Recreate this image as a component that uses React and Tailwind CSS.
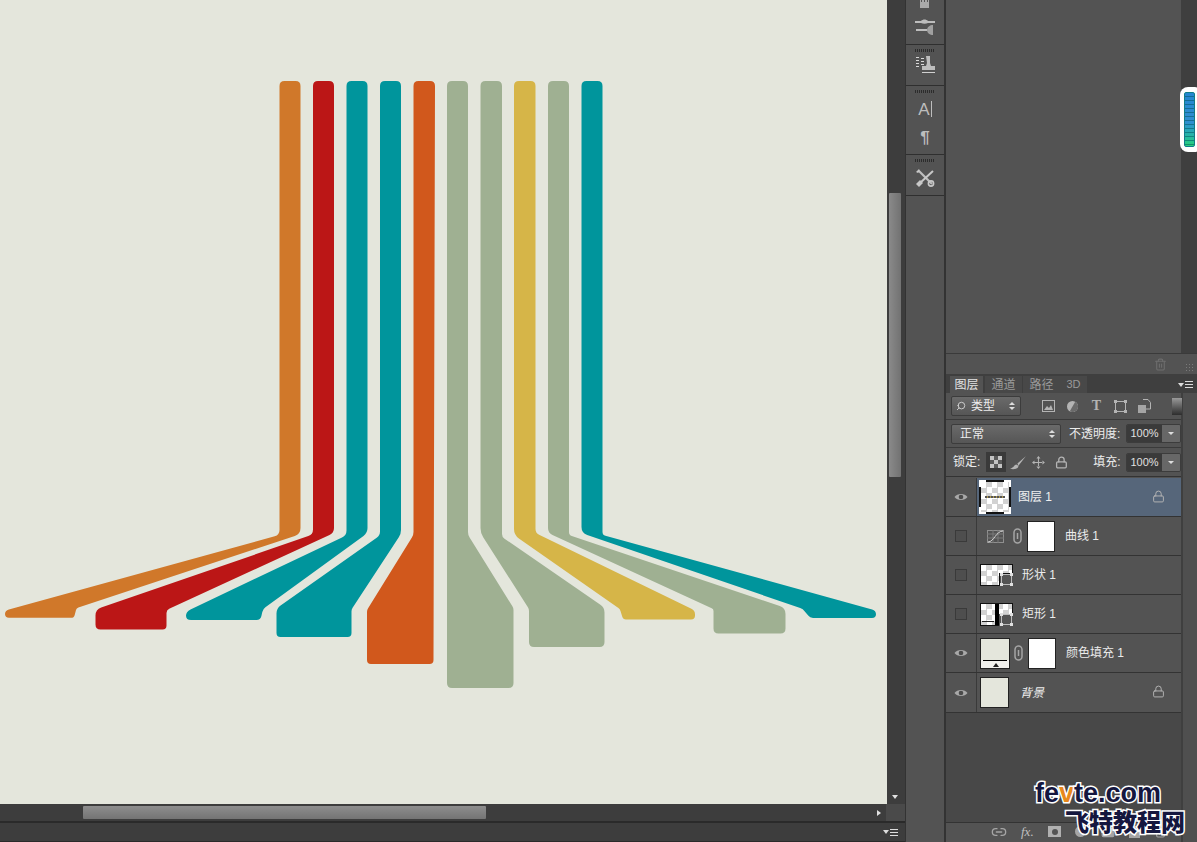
import React from "react";
import { Lock, Trash2, Link2, Folder, Search } from "lucide-react";

const FONT = "font-['Liberation_Sans','Noto_Sans_CJK_SC',sans-serif]";

function roundedPath(pts) {
  const n = pts.length;
  let d = "";
  pts.forEach((p, i) => {
    const [x, y, r = 0] = p;
    const a = pts[(i - 1 + n) % n];
    const b = pts[(i + 1) % n];
    const la = Math.hypot(a[0] - x, a[1] - y);
    const lb = Math.hypot(b[0] - x, b[1] - y);
    const ra = Math.min(r, la / 2);
    const rb = Math.min(r, lb / 2);
    const sx = x + ((a[0] - x) / la) * ra;
    const sy = y + ((a[1] - y) / la) * ra;
    const ex = x + ((b[0] - x) / lb) * rb;
    const ey = y + ((b[1] - y) / lb) * rb;
    d += `${i === 0 ? "M" : "L"}${sx.toFixed(1)} ${sy.toFixed(1)} Q${x} ${y} ${ex.toFixed(1)} ${ey.toFixed(1)} `;
  });
  return d + "Z";
}

const T = 81;
const shapes = [
  ["#d0782a", [[279.5,T,5],[300.5,T,5],[300.5,534,6],[76.5,608,2],[74,617.8,3],[5,617.8,4],[5,610.5,4],[279.5,535,5]]],
  ["#bb1616", [[313,T,5],[334,T,5],[334,533,5],[166.5,610,3],[166.5,629.5,4],[95.5,629.5,5],[95.5,609.5,6],[313,534.5,5]]],
  ["#00959c", [[346.5,T,5],[367.5,T,5],[367.5,533,5],[263,609,3],[260.5,620,4],[186,620,5],[186,611.5,5],[346.5,535.5,5]]],
  ["#00959c", [[380,T,5],[401,T,5],[401,534,4],[351.5,609.5,2],[351.5,637,4],[276.5,637,4],[276.5,608.5,5],[380,535.5,4]]],
  ["#d1581c", [[413.5,T,5],[435,T,5],[433.5,664,4],[367,664,4],[367,610,2],[413.5,535,3]]],
  ["#9fb092", [[447,T,5],[468,T,5],[468,535,3],[513.5,608,2],[513.5,688,5],[447,688,5]]],
  ["#9fb092", [[480.5,T,5],[502,T,5],[502,537,3],[604.5,607.5,5],[604.5,647,5],[529,647,5],[529,609,2],[480.5,533,5]]],
  ["#d6b548", [[514,T,5],[535.5,T,5],[535.5,533,4],[695,610.5,4],[695,619.5,4],[623,619.5,3],[620,609,2],[514,535,6]]],
  ["#9fb092", [[548,T,5],[569,T,5],[569,535,3],[785.5,608,6],[785.5,633.5,5],[713.5,633.5,5],[713.5,609,2],[548,533,5]]],
  ["#00959c", [[581.5,T,5],[602.5,T,5],[602.5,535,3],[876,610.5,4],[876,618,4],[810,618,3],[803,609,3],[581.5,533,6]]],
];

function Canvas() {
  return (
    <div className="w-[887px] h-full bg-[#e4e6dc] shrink-0">
      <svg width="887" height="804" viewBox="0 0 887 804" className="block">
        {shapes.map(([c, p], i) => (
          <path key={i} d={roundedPath(p)} fill={c} />
        ))}
      </svg>
    </div>
  );
}

function Grip() {
  return <div className="mx-auto w-[20px] h-[3px] bg-[repeating-linear-gradient(90deg,#2c2c2c_0_1px,transparent_1px_2px)]" />;
}

function Dock() {
  return (
    <div className={`w-[41px] shrink-0 h-full bg-[#535353] border-r-2 border-l border-[#333333] flex flex-col ${FONT}`}>
      <div className="h-[45px] border-b border-[#2f2f2f] flex flex-col items-center">
        <svg width="24" height="42" viewBox="0 0 24 42" className="block">
          <path d="M7 0h1v2h1V0h2v2h1V0h2v2h1V0h1v8H7z" fill="#a9a9a9" />
          <path d="M2 21h6c2-2 5-2 7 0h7v2h-7c-2 1-5 1-7 0H2z" fill="#bdbdbd" />
          <path d="M3 29h11v2H3z" fill="#bdbdbd" />
          <path d="M14 30c0-3 3-5 6-5v10c-3 0-6-2-6-5z" fill="#a0a0a0" />
        </svg>
      </div>
      <div className="h-[41px] pt-[4px] border-b border-[#2f2f2f] flex flex-col items-center">
        <Grip />
        <svg width="22" height="24" viewBox="0 0 22 24" className="block mt-[1px]">
          <path d="M2 4h3v1H2zM2 7h3v1H2zM2 10h3v1H2zM2 13h3v1H2zM7 5h3v1H7zM7 8h3v1H7zM7 11h3v1H7z" fill="#d8d8d8" />
          <path d="M12 3h4v7l1 3h4v4H8v-4h4l1-3z" fill="#bdbdbd" />
          <path d="M8 19h13v1H8z" fill="#d0d0d0" />
        </svg>
      </div>
      <div className="h-[69px] pt-[4px] border-b border-[#2f2f2f] flex flex-col items-center">
        <Grip />
        <div className="h-[30px] mt-[1px] flex items-center text-[#bdbdbd] text-[17px] leading-none">
          A<span className="w-px h-[16px] bg-[#bdbdbd] ml-[1px]" />
        </div>
        <div className="h-[26px] flex items-center text-[#bdbdbd] text-[17px] font-bold leading-none">¶</div>
      </div>
      <div className="h-[41px] pt-[4px] border-b border-[#2f2f2f] flex flex-col items-center">
        <Grip />
        <svg width="20" height="20" viewBox="0 0 20 20" className="block mt-[6px]">
          <path d="M4 3l13 13" stroke="#bdbdbd" strokeWidth="2.2" />
          <path d="M18 3L5 15" stroke="#c8c8c8" strokeWidth="2" />
          <path d="M1 4l3-3 1 2-2 2z" fill="#c8c8c8" />
          <circle cx="16" cy="15.5" r="2.6" fill="none" stroke="#c8c8c8" strokeWidth="1.6" />
          <path d="M1 16l4-4 3 3-4 4z" fill="#c8c8c8" />
        </svg>
      </div>
    </div>
  );
}

function Eye() {
  return (
    <svg width="14" height="10" viewBox="0 0 14 10" className="block">
      <path d="M0.5 5C3 1 11 1 13.5 5 11 9 3 9 0.5 5z" fill="#a9a9a9" />
      <circle cx="7" cy="5" r="2.3" fill="#4a4a4a" />
    </svg>
  );
}

function Check() {
  return <div className="w-[12px] h-[12px] border border-[#3a3a3a] bg-[#4e4e4e]" />;
}

const CHECKER = "bg-[repeating-conic-gradient(#d2d2d2_0_25%,#ffffff_0_50%)] bg-[length:11px_11px]";

function LinkIcon() {
  return (
    <svg width="9" height="16" viewBox="0 0 9 16" className="block">
      <rect x="1" y="1" width="7" height="14" rx="3.5" fill="none" stroke="#a5a5a5" strokeWidth="1.5" />
      <path d="M4.5 5v6" stroke="#a5a5a5" strokeWidth="1.5" />
    </svg>
  );
}

function Mask() {
  return <div className="w-[28px] h-[31px] bg-white border border-[#222222] shrink-0" />;
}

function VectorBadge() {
  return (
    <svg width="13" height="13" viewBox="0 0 13 13" className="absolute right-[-1px] bottom-[-1px]">
      <rect x="1.5" y="1.5" width="10" height="10" fill="none" stroke="#bdbdbd" />
      <path d="M0 0h3v3H0zM10 0h3v3h-3zM0 10h3v3H0zM10 10h3v3h-3z" fill="#e0e0e0" />
    </svg>
  );
}

function Label({ children, className = "" }) {
  return <span className={`text-[12px] text-[#ececec] leading-none whitespace-nowrap ${className}`}>{children}</span>;
}

function Row({ eye, selected, children, right, h = "h-[39px]" }) {
  return (
    <div className={`${h} flex border-b border-[#333333] shrink-0`}>
      <div className="w-[31px] shrink-0 border-r border-[#3a3a3a] flex items-center justify-center">
        {eye ? <Eye /> : <Check />}
      </div>
      <div className={`flex-1 flex items-center relative ${selected ? "bg-[#56667a]" : ""}`}>
        {children}
        {right && <Lock size={13} strokeWidth={1.8} className="text-[#b4b4b4] absolute left-[175px] top-[12px]" />}
      </div>
    </div>
  );
}

function Stepper() {
  return (
    <div className="flex flex-col gap-[2px] items-center">
      <span className="w-0 h-0 border-x-[3px] border-x-transparent border-b-[3px] border-b-[#dddddd]" />
      <span className="w-0 h-0 border-x-[3px] border-x-transparent border-t-[3px] border-t-[#dddddd]" />
    </div>
  );
}

function Percent() {
  return (
    <div className="flex h-[19px] w-[55px] shrink-0 border border-[#3c3c3c] rounded-[2px] overflow-hidden">
      <div className="w-[35px] bg-[#3a3a3a] text-[#e0e0e0] text-[11px] flex items-center justify-center">100%</div>
      <div className="flex-1 bg-[#676767] flex items-center justify-center">
        <span className="w-0 h-0 border-x-[3px] border-x-transparent border-t-[3px] border-t-[#dddddd]" />
      </div>
    </div>
  );
}

function FilterIcons() {
  return (
    <div className="flex items-center ml-[21px] gap-[11px] text-[#b4b4b4]">
      <svg width="13" height="12" viewBox="0 0 13 12" className="block">
        <rect x="0.5" y="0.5" width="12" height="11" fill="none" stroke="#b4b4b4" />
        <path d="M2 10l3-4 2 2 2-3 2 5z" fill="#b4b4b4" />
      </svg>
      <svg width="13" height="13" viewBox="0 0 13 13" className="block">
        <circle cx="6.5" cy="6.5" r="5.5" fill="#b4b4b4" />
        <path d="M6.5 1a5.5 5.5 0 0 1 0 11z" fill="#6a6a6a" transform="rotate(30 6.5 6.5)" />
      </svg>
      <span className="font-['Liberation_Serif',serif] font-bold text-[14px] leading-none w-[13px] text-center">T</span>
      <svg width="13" height="13" viewBox="0 0 13 13" className="block">
        <rect x="1.5" y="1.5" width="10" height="10" fill="none" stroke="#b4b4b4" />
        <path d="M0 0h3v3H0zM10 0h3v3h-3zM0 10h3v3H0zM10 10h3v3h-3z" fill="#b4b4b4" />
      </svg>
      <svg width="13" height="14" viewBox="0 0 13 14" className="block">
        <path d="M5 0.5h5l2.5 3V10H8" fill="none" stroke="#b4b4b4" />
        <rect x="0" y="6" width="8" height="8" fill="#a5a5a5" />
      </svg>
    </div>
  );
}

function LayersPanel() {
  return (
    <div className="flex-1 flex flex-col bg-[#4f4f4f] min-h-0">
      <div className="h-[19px] shrink-0 bg-[#3f3f3f] flex items-end pl-[4px] pr-[4px] relative">
        <div className="w-[33px] h-[17px] bg-[#535353] text-[#e4e4e4] text-[12px] leading-none flex items-center justify-center">图层</div>
        <div className="w-[37px] h-[17px] ml-[2px] bg-[#484848] text-[#9a9a9a] text-[12px] leading-none flex items-center justify-center">通道</div>
        <div className="w-[37px] h-[17px] ml-[1px] bg-[#484848] text-[#9a9a9a] text-[12px] leading-none flex items-center justify-center">路径</div>
        <div className="w-[27px] h-[17px] bg-[#484848] text-[#9a9a9a] text-[11px] leading-none flex items-center justify-center">3D</div>
        <div className="ml-auto flex items-center gap-[1px] mb-[5px]">
          <span className="w-0 h-0 border-x-[3px] border-x-transparent border-t-[4px] border-t-[#dddddd]" />
          <span className="w-[8px] h-[7px] bg-[repeating-linear-gradient(180deg,#dddddd_0_1px,transparent_1px_3px)]" />
        </div>
      </div>
      <div className="flex-1 flex min-h-0">
        <div className="w-[237px] shrink-0 flex flex-col border-r-2 border-[#3f3f3f] bg-[#535353]">
          <div className="h-[27px] shrink-0 flex items-center px-[5px] border-b border-[#3a3a3a]">
            <div className="w-[70px] h-[20px] shrink-0 bg-gradient-to-b from-[#6a6a6a] to-[#565656] border border-[#3c3c3c] rounded-[2px] flex items-center pl-[4px] pr-[5px] gap-[5px]">
              <Search size={10} className="text-[#dddddd] -scale-x-100" />
              <Label>类型</Label>
              <span className="ml-auto"><Stepper /></span>
            </div>
            <FilterIcons />
            <div className="ml-[21px] w-[10px] h-[17px] shrink-0 bg-gradient-to-b from-[#9a9a9a] to-[#2e2e2e]" />
          </div>
          <div className="h-[28px] shrink-0 flex items-center pl-[5px] border-b border-[#3a3a3a]">
            <div className="w-[110px] h-[20px] shrink-0 bg-gradient-to-b from-[#6a6a6a] to-[#565656] border border-[#3c3c3c] rounded-[2px] flex items-center pl-[8px] pr-[5px]">
              <Label>正常</Label>
              <span className="ml-auto"><Stepper /></span>
            </div>
            <Label className="ml-[8px] w-[57px]">不透明度:</Label>
            <Percent />
          </div>
          <div className="h-[29px] shrink-0 flex items-center pl-[7px] border-b border-[#333333]">
            <Label className="w-[33px]">锁定:</Label>
            <div className="w-[20px] h-[20px] bg-[#3a3a3a] flex items-center justify-center">
              <div className="w-[12px] h-[12px] bg-[repeating-conic-gradient(#5a5a5a_0_25%,#c4c4c4_0_50%)] bg-[length:8px_8px]" />
            </div>
            <svg width="17" height="15" viewBox="0 0 16 14" className="block ml-[4px]">
              <path d="M15 1L7 8l1 2 7-9zM6 9c-2 0-2 3-6 4 4 1 8 0 8-3z" fill="#b4b4b4" />
            </svg>
            <svg width="13" height="13" viewBox="0 0 13 13" className="block ml-[6px]">
              <path d="M6.5 0l2 2.5h-4zM6.5 13l2-2.5h-4zM0 6.5L2.5 4.5v4zM13 6.5l-2.5-2v4zM6 2h1v9H6zM2 6h9v1H2z" fill="#b4b4b4" />
            </svg>
            <Lock size={13} strokeWidth={2.4} className="text-[#b4b4b4] ml-[10px]" />
            <Label className="ml-[25px] w-[33px]">填充:</Label>
            <Percent />
          </div>
          <div className="h-px shrink-0" />
          <Row eye selected right>
            <div className={`relative ml-[2px] w-[32px] h-[34px] border-2 border-[#111111] ${CHECKER}`}>
              <span className="absolute -left-[2px] -top-[2px] w-[7px] h-[7px] border-l-2 border-t-2 border-white" />
              <span className="absolute -right-[2px] -top-[2px] w-[7px] h-[7px] border-r-2 border-t-2 border-white" />
              <span className="absolute -left-[2px] -bottom-[2px] w-[7px] h-[7px] border-l-2 border-b-2 border-white" />
              <span className="absolute -right-[2px] -bottom-[2px] w-[7px] h-[7px] border-r-2 border-b-2 border-white" />
              <span className="absolute left-[4px] right-[4px] top-[14px] h-[2px] bg-[repeating-linear-gradient(90deg,#555555_0_2px,#b09a50_2px_3px)]" />
            </div>
            <Label className="ml-[7px] text-[#f0f0f0]">图层 1</Label>
          </Row>
          <Row>
            <svg width="17" height="13" viewBox="0 0 17 13" className="block ml-[10px]">
              <rect x="0.5" y="0.5" width="16" height="12" fill="none" stroke="#8f8f8f" />
              <path d="M6 0v13M11 0v13M0 4h17M0 8h17" stroke="#7a7a7a" />
              <path d="M1 12C7 12 9 1 16 1" fill="none" stroke="#d6d6d6" />
            </svg>
            <span className="ml-[9px]"><LinkIcon /></span>
            <span className="ml-[5px]"><Mask /></span>
            <Label className="ml-[10px]">曲线 1</Label>
          </Row>
          <Row>
            <div className={`relative ml-[3px] w-[33px] h-[22px] border border-[#111111] ${CHECKER}`}>
              <span className="absolute right-[-1px] bottom-[-1px] w-[14px] h-[13px] bg-[#535353] border-l border-t border-[#111111]" />
              <VectorBadge />
            </div>
            <Label className="ml-[9px]">形状 1</Label>
          </Row>
          <Row>
            <div className={`relative ml-[3px] w-[33px] h-[23px] border border-[#111111] ${CHECKER}`}>
              <span className="absolute left-[14px] top-0 bottom-0 w-[4px] bg-black" />
              <span className="absolute left-[1px] right-[18px] bottom-[3px] h-[1px] bg-[#222222]" />
              <span className="absolute right-[-1px] bottom-[-1px] w-[14px] h-[12px] bg-[#535353]" />
              <VectorBadge />
            </div>
            <Label className="ml-[9px]">矩形 1</Label>
          </Row>
          <Row eye>
            <div className="relative ml-[3px] w-[30px] h-[31px] bg-[#e4e6dc] border border-[#222222] shrink-0">
              <span className="absolute left-0 right-0 bottom-0 h-[8px] bg-[#f2f2ee]" />
              <span className="absolute left-[2px] right-[2px] top-[21px] h-px bg-black" />
              <span className="absolute left-[12px] bottom-[1px] w-0 h-0 border-x-[3px] border-x-transparent border-b-[4px] border-b-[#222222]" />
            </div>
            <span className="ml-[4px]"><LinkIcon /></span>
            <span className="ml-[5px]"><Mask /></span>
            <Label className="ml-[10px]">颜色填充 1</Label>
          </Row>
          <Row eye right h="h-[40px]">
            <div className="ml-[3px] w-[29px] h-[31px] bg-[#e4e6dc] border border-[#222222] shrink-0" />
            <Label className="ml-[11px] italic">背景</Label>
          </Row>
          <div className="flex-1 bg-[#484848]" />
          <div className="h-[20px] shrink-0 bg-[#535353] border-t border-[#333333] relative text-[#a5a5a5]">
            <Link2 size={16} className="absolute left-[45px] top-[1px]" />
            <span className="absolute left-[75px] top-[2px] italic text-[13px] leading-none font-['Liberation_Serif',serif] text-[#c0c0c0]">fx.</span>
            <span className="absolute left-[102px] top-[3px] w-[13px] h-[11px] bg-[#b0b0b0] flex items-center justify-center">
              <span className="w-[6px] h-[6px] rounded-full bg-[#535353]" />
            </span>
            <span className="absolute left-[129px] top-[3px] w-[11px] h-[11px] rounded-full bg-[#a5a5a5]" />
            <Folder size={14} fill="#a5a5a5" className="absolute left-[155px] top-[2px]" />
            <span className="absolute left-[183px] top-[3px] w-[11px] h-[12px] bg-[#a5a5a5]" />
            <Trash2 size={13} className="absolute left-[208px] top-[2px]" />
          </div>
        </div>
        <div className="flex-1" />
      </div>
    </div>
  );
}

function RightArea() {
  return (
    <div className={`flex-1 flex flex-col h-full min-w-0 ${FONT}`}>
      <div className="h-[354px] shrink-0 flex border-b border-[#3a3a3a]">
        <div className="w-[235px] shrink-0 bg-[#535353]" />
        <div className="flex-1 bg-[#3f3f3f] relative">
          <div className="absolute left-[-1px] top-[87px] w-[18px] h-[65px] bg-white rounded-l-[8px] rounded-r-[3px] pl-[4px] pr-[3px] py-[5px]">
            <div className="w-full h-full rounded-[2px] bg-gradient-to-b from-[#2586d0] via-[#2f8fd0] via-55% to-[#2bd07a] border border-[#0f7d8a] relative overflow-hidden">
              <div className="absolute inset-0 bg-[repeating-linear-gradient(180deg,transparent_0_3px,rgba(0,80,90,0.5)_3px_4px)]" />
            </div>
          </div>
        </div>
      </div>
      <div className="h-[20px] shrink-0 bg-[#535353] flex items-center justify-end pr-[30px] relative">
        <Trash2 size={13} className="text-[#6e6e6e]" />
        <span className="absolute right-[3px] bottom-[2px] w-[9px] h-[9px] bg-[radial-gradient(#7a7a7a_1px,transparent_1px)] bg-[length:3px_3px]" />
      </div>
      <LayersPanel />
    </div>
  );
}

export default function App() {
  return (
    <div className={`relative w-[1197px] h-[842px] overflow-hidden flex bg-[#333333] ${FONT}`}>
      <div className="w-[905px] shrink-0 h-full flex flex-col">
        <div className="h-[804px] shrink-0 flex">
          <Canvas />
          <div className="flex-1 bg-[#3d3d3d] flex flex-col items-center pb-[5px]">
            <div className="mt-[193px] w-[12px] h-[284px] bg-gradient-to-r from-[#8a8a8a] to-[#727272] rounded-[1px] mr-[2px]" />
            <span className="mt-auto mr-[2px] w-0 h-0 border-x-[3px] border-x-transparent border-t-[4px] border-t-[#e0e0e0]" />
          </div>
        </div>
        <div className="h-[18px] shrink-0 bg-[#3d3d3d] border-b border-[#2a2a2a] flex items-center">
          <div className="ml-[83px] w-[403px] h-[13px] bg-gradient-to-b from-[#8e8e8e] to-[#747474] rounded-[1px]" />
          <span className="ml-[391px] w-0 h-0 border-y-[3px] border-y-transparent border-l-[4px] border-l-[#e0e0e0]" />
          <div className="ml-[5px] flex-1 h-full bg-[#4a4a4a]" />
        </div>
        <div className="flex-1 bg-[#3d3d3d] border-y border-[#2a2a2a] flex items-center justify-end pr-[7px] gap-[1px]">
          <span className="w-0 h-0 border-x-[3px] border-x-transparent border-t-[4px] border-t-[#dddddd]" />
          <span className="w-[8px] h-[7px] bg-[repeating-linear-gradient(180deg,#dddddd_0_1px,transparent_1px_3px)]" />
        </div>
      </div>
      <Dock />
      <RightArea />
      <div className="absolute left-[1035px] top-[780px] w-[162px] pointer-events-none">
        <div className="font-['Liberation_Sans',sans-serif] font-bold text-[27px] leading-[27px] text-[#15173f] [-webkit-text-stroke:3px_white] [paint-order:stroke_fill]">
          fe<span className="text-[#e8891c]">v</span>te.com
        </div>
        <div className="ml-[30px] font-['Noto_Sans_CJK_SC',sans-serif] font-black text-[24px] leading-[27px] whitespace-nowrap text-[#15173f] [-webkit-text-stroke:3px_white] [paint-order:stroke_fill]">
          飞特教程网
        </div>
      </div>
    </div>
  );
}
